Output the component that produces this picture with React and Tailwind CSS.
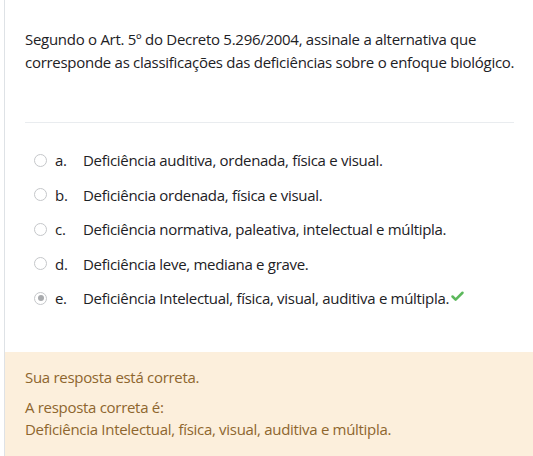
import { Check } from "lucide-react";

const options = [
    { letter: "a.", text: "Deficiência auditiva, ordenada, física e visual." },
    { letter: "b.", text: "Deficiência ordenada, física e visual." },
    { letter: "c.", text: "Deficiência normativa, paleativa, intelectual e múltipla." },
    { letter: "d.", text: "Deficiência leve, mediana e grave." },
    { letter: "e.", text: "Deficiência Intelectual, física, visual, auditiva e múltipla.", checked: true, correct: true },
];

function Radio({ checked }) {
    return (
        <span className="w-[13px] h-[13px] rounded-full border-[1.5px] border-[#c5c7ca] bg-white flex items-center justify-center shrink-0">
            {checked && <span className="w-[6px] h-[6px] rounded-full bg-[#a9abae]" />}
        </span>
    );
}

export default function App() {
    return (
        <div className="w-[533px] h-[456px] bg-white overflow-hidden text-[#1d2125] text-[15px]" style={{ fontFamily: '"Open Sans", "Noto Sans", sans-serif' }}>
            <div className="ml-[4px] border-l border-[#dee2e6] h-full flex flex-col">
                <div className="px-[20px] pt-[28px]">
                    <p className="leading-[23px] tracking-[-0.28px] whitespace-nowrap">
                        Segundo o Art. 5º do Decreto 5.296/2004, assinale a alternativa que<br />
                        corresponde as classificações das deficiências sobre o enfoque biológico.
                    </p>
                    <div className="mt-[48px] border-t border-[#e9ecef] mr-[-1px]" />
                    <div className="pt-[26px] flex flex-col gap-[12px] pl-[9px]">
                        {options.map((o) => (
                            <div key={o.letter} className="flex items-center h-[22.5px] tracking-[-0.3px]">
                                <Radio checked={o.checked} />
                                <span className="ml-[8px] w-[28px]">{o.letter}</span>
                                <span>{o.text}</span>
                                {o.correct && <Check size={15} strokeWidth={4} className="text-[#5cb85c] ml-[1px] -mt-[4px]" />}
                            </div>
                        ))}
                    </div>
                </div>
                <div className="mt-[42px] flex-1 bg-[#fcefdc] text-[#8e662e] px-[20px] pt-[14px] tracking-[-0.3px]">
                    <p className="leading-[22px]">Sua resposta está correta.</p>
                    <p className="leading-[22px] mt-[8px]">A resposta correta é:</p>
                    <p className="leading-[22px]">Deficiência Intelectual, física, visual, auditiva e múltipla.</p>
                </div>
            </div>
        </div>
    );
}
